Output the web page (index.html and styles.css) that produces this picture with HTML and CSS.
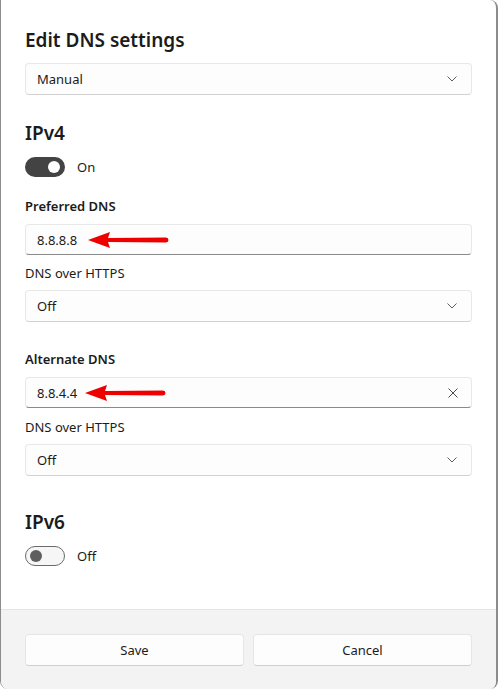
FILE: index.html
```html
<!DOCTYPE html>
<html>
<head>
<meta charset="utf-8">
<link rel="stylesheet" href="styles.css">
</head>
<body>
<div class="dialog">
  <div class="content">
    <h1 class="title">Edit DNS settings</h1>
    <div class="select mt-9"><span>Manual</span><svg class="chev" width="10" height="6" viewBox="0 0 10 6"><path d="M0.5 0.5 L5 5 L9.5 0.5" fill="none" stroke="#5c5c5c" stroke-width="1"/></svg></div>

    <h2 class="heading mt-24">IPv4</h2>
    <div class="toggle-row mt-10"><span class="toggle on"><span class="knob"></span></span><span class="toggle-label">On</span></div>

    <div class="label strong mt-19">Preferred DNS</div>
    <div class="input mt-8"><span>8.8.8.8</span>
      <svg class="arrow" width="82" height="18" viewBox="0 0 82 18"><path d="M0 9 L22 1 L20 7 L78 6.5 A2.5 2.5 0 0 1 78 11.5 L20 11 L22 17 Z" fill="#ee0000"/></svg>
    </div>
    <div class="label mt-8">DNS over HTTPS</div>
    <div class="select mt-7"><span>Off</span><svg class="chev" width="10" height="6" viewBox="0 0 10 6"><path d="M0.5 0.5 L5 5 L9.5 0.5" fill="none" stroke="#5c5c5c" stroke-width="1"/></svg></div>

    <div class="label strong mt-27">Alternate DNS</div>
    <div class="input mt-8"><span>8.8.4.4</span>
      <svg class="arrow alt" width="82" height="18" viewBox="0 0 82 18"><path d="M0 9 L22 1 L20 7 L78 6.5 A2.5 2.5 0 0 1 78 11.5 L20 11 L22 17 Z" fill="#ee0000"/></svg>
      <svg class="clear" width="10" height="10" viewBox="0 0 10 10"><path d="M0.5 0.5 L9.5 9.5 M9.5 0.5 L0.5 9.5" stroke="#4a4a4a" stroke-width="1" fill="none"/></svg>
    </div>
    <div class="label mt-9">DNS over HTTPS</div>
    <div class="select mt-7"><span>Off</span><svg class="chev" width="10" height="6" viewBox="0 0 10 6"><path d="M0.5 0.5 L5 5 L9.5 0.5" fill="none" stroke="#5c5c5c" stroke-width="1"/></svg></div>

    <h2 class="heading mt-32">IPv6</h2>
    <div class="toggle-row mt-10"><span class="toggle off"><span class="knob"></span></span><span class="toggle-label">Off</span></div>
  </div>
  <div class="footer">
    <button class="btn">Save</button>
    <button class="btn">Cancel</button>
  </div>
</div>
</body>
</html>
```

FILE: styles.css
```css
* { box-sizing: border-box; }
html, body { margin: 0; padding: 0; background: #ffffff; }
body {
  font-family: "Noto Sans", "Open Sans", sans-serif;
  font-size: 13px;
  color: #1b1b1b;
}
.dialog {
  height: 689px;
  width: 498px;
  display: flex;
  flex-direction: column;
  border-left: 1px solid #8c8c8c;
  border-right: 2px solid #8c8c8c;
  border-radius: 0 8px 8px 8px;
  overflow: hidden;
  background: #fff;
}
.content {
  flex: 1;
  padding: 26px 24px 0 24px;
}
.title {
  margin: 0;
  font-size: 19px;
  font-weight: 600;
  line-height: 28px;
  height: 28px;
}
.heading {
  margin: 0;
  font-size: 19px;
  font-weight: 600;
  line-height: 28px;
  height: 28px;
}
.mt-7 { margin-top: 7px; }
.mt-8 { margin-top: 8px; }
.mt-9 { margin-top: 9px; }
.mt-10 { margin-top: 10px; }
.mt-19 { margin-top: 19px; }
.mt-24 { margin-top: 24px; }
.mt-27 { margin-top: 27px; }
.mt-32 { margin-top: 32px; }
.select, .input {
  position: relative;
  height: 32px;
  display: flex;
  align-items: center;
  justify-content: space-between;
  padding: 0 14px 0 11px;
  border: 1px solid #e8e8e8;
  border-bottom-color: #d2d2d2;
  border-radius: 4px;
  background: #fdfdfd;
}
.input {
  height: 31px;
  border-bottom: 1px solid #8a8a8a;
}
.arrow {
  position: absolute;
  left: 62px;
  top: 6px;
}
.arrow.alt { left: 59px; }
.clear {
  position: absolute;
  right: 13px;
  top: 10px;
}
.label {
  line-height: 20px;
  height: 20px;
}
.strong { font-weight: 600; }
.toggle-row {
  display: flex;
  align-items: center;
  height: 20px;
}
.toggle {
  width: 40px;
  height: 20px;
  border-radius: 10px;
  position: relative;
  display: inline-block;
}
.toggle.on { background: #434343; }
.toggle.off { background: #f6f6f6; border: 1px solid #6a6a6a; }
.toggle .knob {
  position: absolute;
  width: 12px;
  height: 12px;
  border-radius: 50%;
  top: 4px;
}
.toggle.on .knob { background: #fff; right: 5px; }
.toggle.off .knob { background: #5f5f5f; left: 4px; top: 3px; }
.toggle-label { margin-left: 12px; }
.footer {
  height: 80px;
  background: #f3f3f3;
  border-top: 1px solid #e5e5e5;
  padding: 24px 24px 0 24px;
  display: grid;
  grid-template-columns: 1fr 1fr;
  column-gap: 9px;
  align-items: start;
}
.btn {
  height: 32px;
  font-family: inherit;
  font-size: 13px;
  color: #1b1b1b;
  background: #fdfdfd;
  border: 1px solid #e6e6e6;
  border-bottom-color: #cfcfcf;
  border-radius: 4px;
}
```
